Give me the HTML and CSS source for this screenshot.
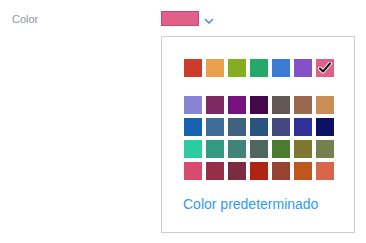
FILE: index.html
```html
<!DOCTYPE html>
<html lang="es">
  <head>
    <meta charset="UTF-8" />
    <title>Color</title>
    <link rel="stylesheet" href="styles.css">
  </head>
  <body>
    <div class="field">
      <div class="field-label">Color</div>
      <div class="picker">
        <div class="trigger">
          <span class="current"></span>
          <svg class="chevron" width="10" height="6" viewBox="0 0 10 6">
            <path d="M1 1 L5 5 L9 1" fill="none" stroke="#4a90d9" stroke-width="1.5" />
          </svg>
        </div>

        <!-- Paleta desplegada -->
        <div class="popup">
          <div class="swatches main">
            <span class="sw" style="background:#cb3d2a"></span>
            <span class="sw" style="background:#e9a14e"></span>
            <span class="sw" style="background:#86ac22"></span>
            <span class="sw" style="background:#24a86b"></span>
            <span class="sw" style="background:#3d7cd5"></span>
            <span class="sw" style="background:#8551c9"></span>
            <span class="sw" style="background:#e0608a">
              <svg width="14" height="12" viewBox="0 0 14 12">
                <path d="M2 6.5 L5 9.5 L12 1.5" fill="none" stroke="#fff" stroke-width="4" stroke-linejoin="round" stroke-linecap="round" />
                <path d="M2 6.5 L5 9.5 L12 1.5" fill="none" stroke="#1a1a1a" stroke-width="2.2" stroke-linejoin="round" stroke-linecap="round" />
              </svg>
            </span>
          </div>
          <div class="swatches">
            <span class="sw" style="background:#8884d3"></span>
            <span class="sw" style="background:#7e2a62"></span>
            <span class="sw" style="background:#76127e"></span>
            <span class="sw" style="background:#44074a"></span>
            <span class="sw" style="background:#625752"></span>
            <span class="sw" style="background:#98694e"></span>
            <span class="sw" style="background:#c98d56"></span>

            <span class="sw" style="background:#1863b0"></span>
            <span class="sw" style="background:#3e6d97"></span>
            <span class="sw" style="background:#41627e"></span>
            <span class="sw" style="background:#27557d"></span>
            <span class="sw" style="background:#43487f"></span>
            <span class="sw" style="background:#303197"></span>
            <span class="sw" style="background:#0b1263"></span>

            <span class="sw" style="background:#2bcc9f"></span>
            <span class="sw" style="background:#329a80"></span>
            <span class="sw" style="background:#41827a"></span>
            <span class="sw" style="background:#526660"></span>
            <span class="sw" style="background:#4b7d31"></span>
            <span class="sw" style="background:#7e7731"></span>
            <span class="sw" style="background:#76804e"></span>

            <span class="sw" style="background:#d84b6e"></span>
            <span class="sw" style="background:#962d49"></span>
            <span class="sw" style="background:#7b2b42"></span>
            <span class="sw" style="background:#b02413"></span>
            <span class="sw" style="background:#974232"></span>
            <span class="sw" style="background:#bf561e"></span>
            <span class="sw" style="background:#d9664c"></span>
          </div>
          <div class="default-link">Color predeterminado</div>
        </div>
      </div>
    </div>
  </body>
</html>
```

FILE: styles.css
```css
body {
  margin: 0;
  font-family: "Liberation Sans", Arial, sans-serif;
  background: #fff;
}
.field {
  display: flex;
  align-items: flex-start;
  padding: 11px 0 0 12px;
}
.field-label {
  width: 149px;
  font-size: 11px;
  color: #8e93a3;
  line-height: 15px;
  padding-top: 1px;
}
.picker {
  display: flex;
  flex-direction: column;
}
.trigger {
  display: flex;
  align-items: center;
  gap: 5px;
}
.current {
  display: block;
  width: 36px;
  height: 13px;
  background: #e0608a;
  border: 1px solid #c04a72;
}
.chevron {
  margin-top: 4px;
}
.popup {
  margin-top: 10px;
  width: 194px;
  height: 197px;
  box-sizing: border-box;
  border: 1px solid #cfcfcf;
  background: #fff;
  padding: 22px 0 0 22px;
}
.swatches {
  display: grid;
  grid-template-columns: repeat(7, 18px);
  grid-auto-rows: 18px;
  gap: 4px;
}
.swatches.main {
  margin-bottom: 19px;
}
.sw {
  display: flex;
  align-items: center;
  justify-content: center;
}
.default-link {
  margin-top: 16px;
  margin-left: -1px;
  font-size: 14px;
  color: #2f9bf2;
}
```
